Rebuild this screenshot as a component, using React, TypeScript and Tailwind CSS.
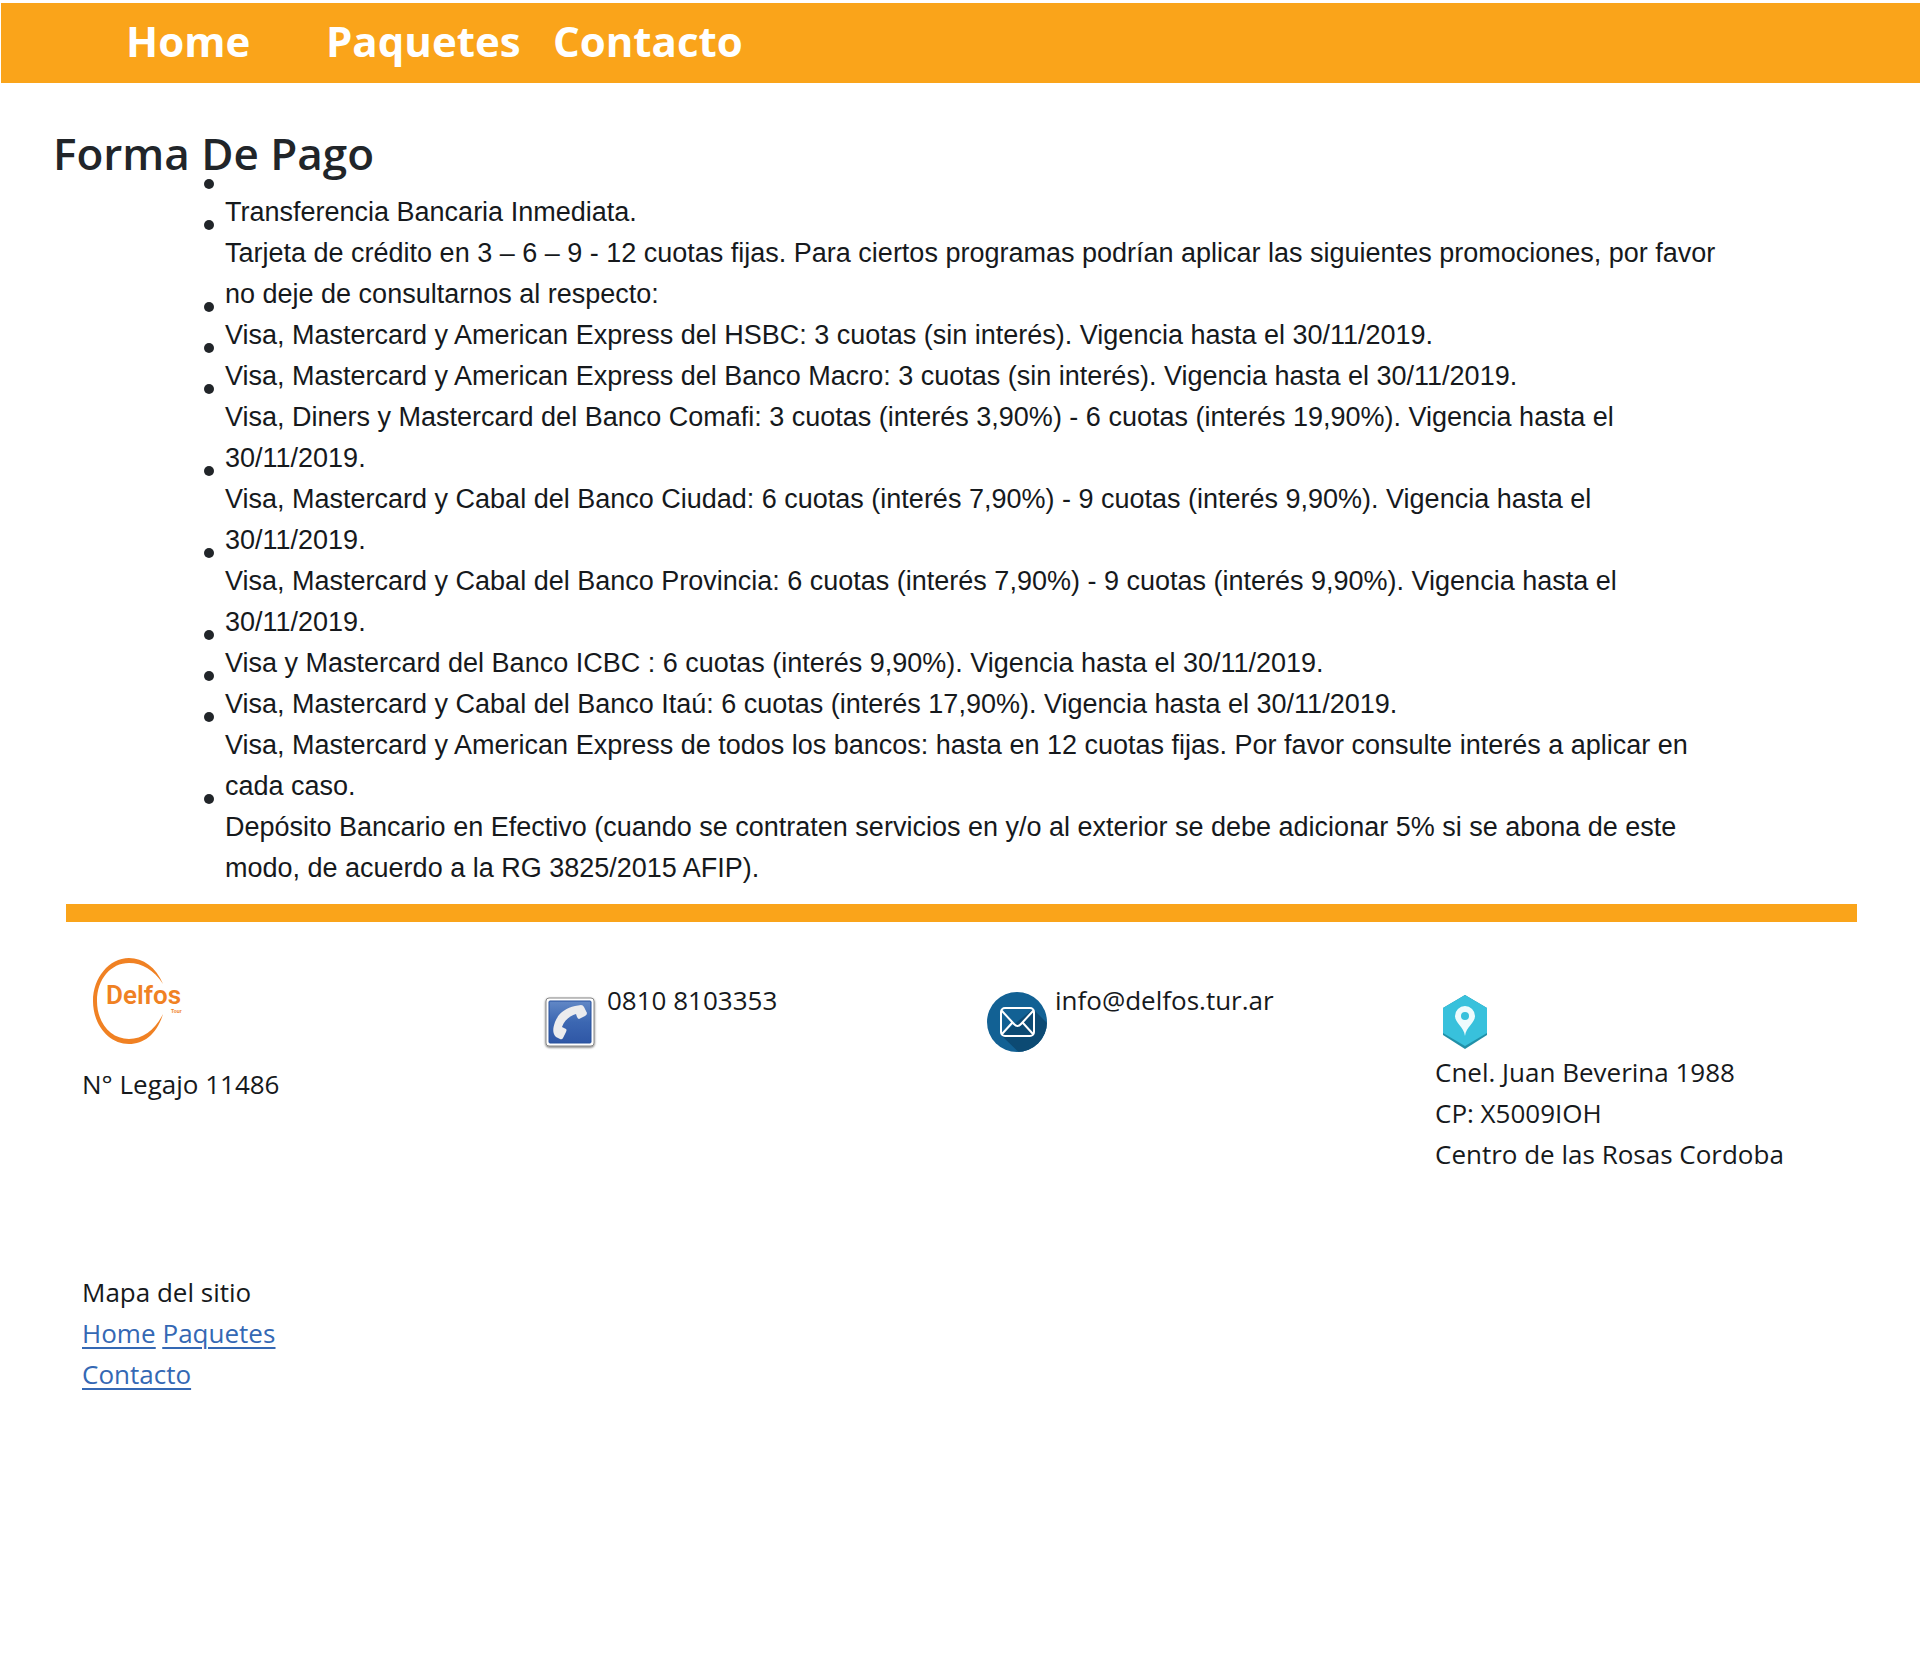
const payments = [
  'Transferencia Bancaria Inmediata.',
  'Tarjeta de crédito en 3 – 6 – 9 - 12 cuotas fijas. Para ciertos programas podrían aplicar las siguientes promociones, por favor no deje de consultarnos al respecto:',
  'Visa, Mastercard y American Express del HSBC: 3 cuotas (sin interés). Vigencia hasta el 30/11/2019.',
  'Visa, Mastercard y American Express del Banco Macro: 3 cuotas (sin interés). Vigencia hasta el 30/11/2019.',
  'Visa, Diners y Mastercard del Banco Comafi: 3 cuotas (interés 3,90%) - 6 cuotas (interés 19,90%). Vigencia hasta el 30/11/2019.',
  'Visa, Mastercard y Cabal del Banco Ciudad: 6 cuotas (interés 7,90%) - 9 cuotas (interés 9,90%). Vigencia hasta el 30/11/2019.',
  'Visa, Mastercard y Cabal del Banco Provincia: 6 cuotas (interés 7,90%) - 9 cuotas (interés 9,90%). Vigencia hasta el 30/11/2019.',
  'Visa y Mastercard del Banco ICBC : 6 cuotas (interés 9,90%). Vigencia hasta el 30/11/2019.',
  'Visa, Mastercard y Cabal del Banco Itaú: 6 cuotas (interés 17,90%). Vigencia hasta el 30/11/2019.',
  'Visa, Mastercard y American Express de todos los bancos: hasta en 12 cuotas fijas. Por favor consulte interés a aplicar en cada caso.',
  'Depósito Bancario en Efectivo (cuando se contraten servicios en y/o al exterior se debe adicionar 5% si se abona de este modo, de acuerdo a la RG 3825/2015 AFIP).',
];

function DelfosLogo() {
  return (
    <svg width="104" height="104" viewBox="0 0 104 104" role="img" aria-label="Delfos Tour">
      <path
        d="M81 34C74 17 61 8 47 8C27 8 11 28 11 51C11 75 27 94 47 94C62 94 75 84 81 64C73 80 61 89 47 89C29 89 15 73 15 51C15 29 29 13 47 13C60 13 72 20 81 34Z"
        fill="#f08123"
      />
      <text x="24" y="54" fill="#f08123" className="font-['Roboto',sans-serif] text-[26px] font-semibold">
        Delfos
      </text>
      <text x="89" y="63" fill="#f08123" className="font-['Liberation_Sans',sans-serif] text-[5px] font-bold">
        Tour
      </text>
    </svg>
  );
}

function PhoneIcon() {
  return (
    <svg width="70" height="70" viewBox="0 0 70 70" aria-hidden="true">
      <defs>
        <linearGradient id="phoneFill" x1="0" y1="0" x2="0" y2="1">
          <stop offset="0" stopColor="#6288c6" />
          <stop offset="0.5" stopColor="#3c67b2" />
          <stop offset="1" stopColor="#2f57a6" />
        </linearGradient>
        <filter id="phoneShadow" x="-20%" y="-20%" width="140%" height="140%">
          <feDropShadow dx="0" dy="1" stdDeviation="1" floodColor="#000" floodOpacity="0.6" />
        </filter>
      </defs>
      <rect x="13" y="12" width="48" height="48" rx="3" fill="#fff" stroke="#888" strokeWidth="1" filter="url(#phoneShadow)" />
      <rect x="16" y="15" width="42" height="42" rx="1" fill="url(#phoneFill)" stroke="#27509d" strokeWidth="1" />
      <path
        d="M42 20L48 19Q50 19 51 21L54 27Q54 29 52 30L46 33Q45 33 44 31L43 28C36 30 31 35 29 41L33 43Q34 44 33 46L30 52Q29 54 27 53L23 51C19 47 20 42 22 36C25 28 32 22 42 20Z"
        fill="#ececee"
      />
    </svg>
  );
}

function MailIcon() {
  return (
    <svg width="60" height="60" viewBox="0 0 60 60" aria-hidden="true">
      <defs>
        <clipPath id="mailClip">
          <circle cx="30" cy="30" r="30" />
        </clipPath>
      </defs>
      <circle cx="30" cy="30" r="30" fill="#126194" />
      <path d="M46 17L70 41V70H42L14 43Z" fill="#0c4a73" clipPath="url(#mailClip)" />
      <g fill="none" stroke="#fff" strokeWidth="2" strokeLinejoin="round" strokeLinecap="round">
        <rect x="14" y="16" width="33" height="28" rx="4" />
        <path d="M15 19L27 32Q30.500 36 34 32L46 19M15 42L25 31M46 42L36 31" />
      </g>
    </svg>
  );
}

function PinIcon() {
  return (
    <svg width="60" height="60" viewBox="0 0 60 60" aria-hidden="true">
      <path d="M30 3L52 16V43L30 57L8 43V16Z" fill="#2190a8" />
      <path d="M30 3L52 16V41L30 54L8 41V16Z" fill="#38c1dc" />
      <path
        fillRule="evenodd"
        d="M30 44C29 35 20 31 20 24A10 10 0 0 1 40 24C40 31 31 35 30 44ZM30 20A4 4 0 1 0 30 28A4 4 0 1 0 30 20Z"
        fill="#eefbfd"
      />
    </svg>
  );
}

export default function App() {
  return (
    <div className="min-h-screen bg-white pt-[3px] font-['Open_Sans',sans-serif] text-[26px] leading-[41px] text-[#212529]">
      <header className="ml-px bg-[#faa41a]">
        <nav className="flex h-20 items-center pb-1 pl-[125px] text-[42px] font-bold leading-[60px] text-white">
          <a href="#home" className="w-[200px]">Home</a>
          <a href="#paquetes" className="w-[227px]">Paquetes</a>
          <a href="#contacto">Contacto</a>
        </nav>
      </header>

      <main className="pl-[53px] pr-[195px] pt-[42px]">
        <h1 className="text-[44px] font-semibold leading-[56px]">Forma De Pago</h1>
        <ul className="mt-[11px] pl-[151px] font-['Liberation_Sans',sans-serif] text-[27px] text-[#16191c]">
          {payments.map((item) => (
            <li key={item} className="flex items-start gap-[11px]">
              <span className="-mt-[13px] size-2.5 shrink-0 rounded-full bg-[#212529]" />
              <span>{item}</span>
            </li>
          ))}
        </ul>
      </main>

      <footer className="pb-20 text-[#16191c]">
        <hr className="ml-[66px] mr-[63px] mt-[15px] h-[18px] border-0 bg-[#faa41a]" />
        <div className="grid grid-cols-4 pl-[82px] pr-[34px] pt-7">
          <div>
            <DelfosLogo />
            <p className="mt-2.5">N° Legajo 11486</p>
          </div>
          <div className="flex items-start gap-1 pt-[30px]">
            <div className="pt-1.5"><PhoneIcon /></div>
            <p>0810 8103353</p>
          </div>
          <div className="flex items-start gap-2 pl-[3px] pt-[30px]">
            <div className="pt-3"><MailIcon /></div>
            <p>info@delfos.tur.ar</p>
          </div>
          <address className="pt-[42px] not-italic">
            <PinIcon />
            <p>Cnel. Juan Beverina 1988</p>
            <p>CP: X5009IOH</p>
            <p>Centro de las Rosas Cordoba</p>
          </address>
        </div>
        <div className="pl-[82px] pt-[97px]">
          <p>Mapa del sitio</p>
          <nav className="flex w-[220px] flex-wrap gap-x-[7px] text-[#3468b4] underline decoration-2 underline-offset-4">
            <a href="#home">Home</a>
            <a href="#paquetes">Paquetes</a>
            <a href="#contacto">Contacto</a>
          </nav>
        </div>
      </footer>
    </div>
  );
}
